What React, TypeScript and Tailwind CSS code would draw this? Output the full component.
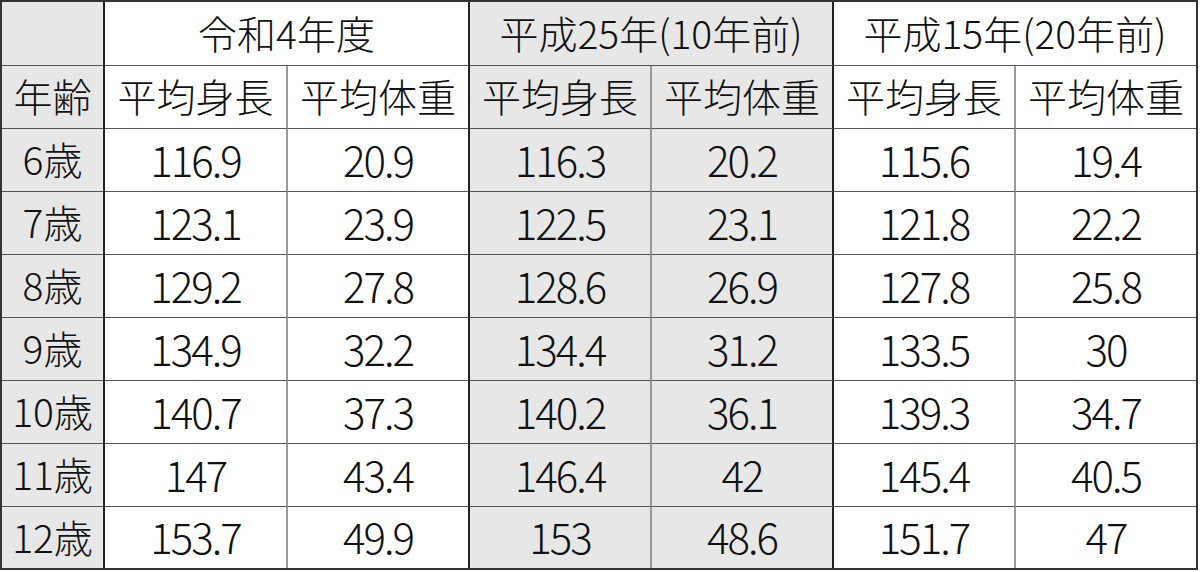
const rows: [string, string[]][] = [
  ["6歳", ["116.9", "20.9", "116.3", "20.2", "115.6", "19.4"]],
  ["7歳", ["123.1", "23.9", "122.5", "23.1", "121.8", "22.2"]],
  ["8歳", ["129.2", "27.8", "128.6", "26.9", "127.8", "25.8"]],
  ["9歳", ["134.9", "32.2", "134.4", "31.2", "133.5", "30"]],
  ["10歳", ["140.7", "37.3", "140.2", "36.1", "139.3", "34.7"]],
  ["11歳", ["147", "43.4", "146.4", "42", "145.4", "40.5"]],
  ["12歳", ["153.7", "49.9", "153", "48.6", "151.7", "47"]],
];

// 列ごとの右罫線: グループ内は灰色、グループ境は濃い線
const colRight = [
  "border-r-2 border-r-[#222]",
  "border-r-2 border-r-[#9a9a9a]",
  "border-r-2 border-r-[#222]",
  "border-r-2 border-r-[#9a9a9a]",
  "border-r-2 border-r-[#222]",
  "border-r-2 border-r-[#9a9a9a]",
  "",
];
const colBg = ["bg-[#e7e7e7]", "bg-white", "bg-white", "bg-[#e7e7e7]", "bg-[#e7e7e7]", "bg-white", "bg-white"];

function Cell({
  col,
  last,
  span,
  num,
  children,
}: {
  col: number;
  last?: boolean;
  span?: boolean;
  num?: boolean;
  children?: React.ReactNode;
}) {
  const right = span ? colRight[col + 1] : colRight[col];
  return (
    <div
      className={`flex items-center justify-center pb-[3px] ${colBg[col]} ${right} ${
        last ? "" : "border-b border-b-[#555]"
      } ${span ? "col-span-2" : ""} ${num ? "text-[42px] tracking-[-2px]" : ""}`}
    >
      {children}
    </div>
  );
}

export default function App() {
  return (
    <div className="w-[1200px] h-[572px] bg-white">
      <div
        className="w-[1198px] h-[570px] border-2 border-[#333] box-border grid grid-cols-[103px_183px_182px_182px_182px_182px_180px] grid-rows-[64px_63px_63px_63px_63px_63px_63px_63px_61px] text-[39px] font-light leading-none text-[#111]"
        style={{ fontFamily: '"Noto Sans CJK JP", "Noto Sans", sans-serif' }}
      >
        <Cell col={0} />
        <Cell col={1} span>
          令和4年度
        </Cell>
        <Cell col={3} span>
          平成25年(10年前)
        </Cell>
        <Cell col={5} span>
          平成15年(20年前)
        </Cell>

        <Cell col={0}>年齢</Cell>
        {[1, 2, 3, 4, 5, 6].map((c) => (
          <Cell key={c} col={c}>
            {c % 2 === 1 ? "平均身長" : "平均体重"}
          </Cell>
        ))}

        {rows.map(([age, vals], i) => {
          const last = i === rows.length - 1;
          return [
            <Cell key={`${age}-a`} col={0} last={last}>
              {age}
            </Cell>,
            ...vals.map((v, j) => (
              <Cell key={`${age}-${j}`} col={j + 1} last={last} num>
                {v}
              </Cell>
            )),
          ];
        })}
      </div>
    </div>
  );
}
